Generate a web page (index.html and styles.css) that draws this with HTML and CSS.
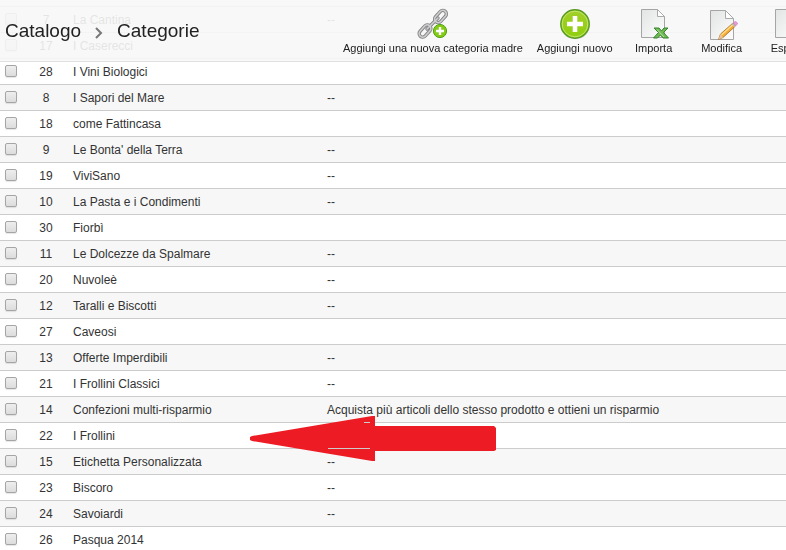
FILE: index.html
```
<!DOCTYPE html>
<html lang="it">
<head>
  <meta charset="utf-8">
  <meta name="viewport" content="width=device-width, initial-scale=1.0">
  <title>Catalogo &gt; Categorie</title>
  <link rel="stylesheet" href="styles.css">
</head>
<body>
  <header class="page-head">
    <h1 class="page-title">
      <span>Catalogo</span>
      <svg class="separator" width="8" height="12" viewBox="0 0 8 12"><path d="M1 1l5 5-5 5" fill="none" stroke="#777" stroke-width="2"/></svg>
      <span>Categorie</span>
    </h1>
    <nav class="toolbar">
      <a class="tool" href="#">
        <svg width="32" height="32" viewBox="0 0 32 32">
          <g fill="none" stroke-linecap="round">
            <g stroke="#858587" stroke-width="3.4">
              <rect x="16.500" y="5" width="14" height="7" rx="3.500" transform="rotate(-48 23.500 8.500)"/>
              <rect x="1" y="19.500" width="14" height="7" rx="3.500" transform="rotate(-48 8 23)"/>
              <path d="M10 21l11-11"/>
            </g>
            <g stroke="#cfcfd1" stroke-width="1.6">
              <rect x="16.500" y="5" width="14" height="7" rx="3.500" transform="rotate(-48 23.500 8.500)"/>
              <rect x="1" y="19.500" width="14" height="7" rx="3.500" transform="rotate(-48 8 23)"/>
              <path d="M10 21l11-11"/>
            </g>
          </g>
          <circle cx="23" cy="23" r="6.600" fill="#84cb16" stroke="#55a01c"/>
          <path d="M23 19v8M19 23h8" stroke="#fff" stroke-width="2.400"/>
        </svg>
        <span>Aggiungi una nuova categoria madre</span>
      </a>
      <a class="tool" href="#">
        <svg width="32" height="32" viewBox="0 0 32 32">
          <defs>
            <linearGradient id="green" x1="0" y1="0" x2="0" y2="1">
              <stop offset="0" stop-color="#a3cf2a"/>
              <stop offset="1" stop-color="#8fce0c"/>
            </linearGradient>
          </defs>
          <circle cx="16.5" cy="16.5" r="14.7" fill="#bbb" opacity=".5"/>
          <circle cx="16" cy="16" r="14.2" fill="url(#green)" stroke="#5a9a26" stroke-width="1.4"/>
          <circle cx="16" cy="16" r="12.8" fill="none" stroke="#c0e56a"/>
          <path d="M16 8v16M8 16h16" stroke="#fff" stroke-width="4.6"/>
        </svg>
        <span>Aggiungi nuovo</span>
      </a>
      <a class="tool" href="#">
        <svg width="32" height="32" viewBox="0 0 32 32">
          <defs>
            <linearGradient id="paper" x1="0" y1="0" x2="1" y2="1">
              <stop offset="0" stop-color="#e2e4e4"/>
              <stop offset="1" stop-color="#fdfdfd"/>
            </linearGradient>
          </defs>
          <path d="M3.500 1.500h16l7 7v21h-23z" fill="url(#paper)" stroke="#a5a5a5"/>
          <path d="M19.500 1.500v7h7z" fill="#fff" stroke="#aaa"/>
          <path d="M16 20h5l2.500 3 2.500-3h4l-4.500 4.500 5 5.500h-5.500l-2.500-3-3 3h-4l5-5.500z" fill="#6fba55" stroke="#34832d"/>
          <path d="M19 21.500l7 7.500" stroke="#b4dfa0"/>
        </svg>
        <span>Importa</span>
      </a>
      <a class="tool" href="#">
        <svg width="32" height="32" viewBox="0 0 32 32">
          <path d="M4.500 2.500h15l8 8v21h-23z" fill="url(#paper)" stroke="#a5a5a5"/>
          <path d="M19.500 2.500v8h8z" fill="#fff" stroke="#aaa"/>
          <path d="M12.500 31.500l2-5.500 12.500-11 2.500 3-12.500 11.500z" fill="#f5ad35" stroke="#a4692a" stroke-width=".8"/>
          <path d="M15.500 27l12-11" stroke="#ffdd8c" stroke-width="1.400"/>
          <path d="M12.500 31.500l2-5.500 2.500 3.500z" fill="#e8c49a"/>
          <path d="M26 15.500l3 3.200" stroke="#bbb" stroke-width="1.500"/>
          <path d="M27.500 14.500q2-2 4 .5 0 1.500-1.700 2.800z" fill="#e59ad9" stroke="#d886cc" stroke-width=".8"/>
        </svg>
        <span>Modifica</span>
      </a>
      <a class="tool" href="#">
        <svg width="32" height="32" viewBox="0 0 32 32">
          <path d="M1.500 1.500h16l7 7v21h-23z" fill="url(#paper)" stroke="#a5a5a5"/>
        </svg>
        <span>Esporta</span>
      </a>
    </nav>
  </header>

  <main class="content">
    <table class="categories">
      <tbody>
        <tr><td class="check"><input type="checkbox" id="c7"></td><td class="num">7</td><td class="name"><label for="c7">La Cantina</label></td><td>--</td></tr>
        <tr><td class="check"><input type="checkbox" id="c17"></td><td class="num">17</td><td class="name"><label for="c17">I Caserecci</label></td><td></td></tr>
        <tr><td class="check"><input type="checkbox" id="c28"></td><td class="num">28</td><td class="name"><label for="c28">I Vini Biologici</label></td><td></td></tr>
        <tr><td class="check"><input type="checkbox" id="c8"></td><td class="num">8</td><td class="name"><label for="c8">I Sapori del Mare</label></td><td>--</td></tr>
        <tr><td class="check"><input type="checkbox" id="c18"></td><td class="num">18</td><td class="name"><label for="c18">come Fattincasa</label></td><td></td></tr>
        <tr><td class="check"><input type="checkbox" id="c9"></td><td class="num">9</td><td class="name"><label for="c9">Le Bonta' della Terra</label></td><td>--</td></tr>
        <tr><td class="check"><input type="checkbox" id="c19"></td><td class="num">19</td><td class="name"><label for="c19">ViviSano</label></td><td>--</td></tr>
        <tr><td class="check"><input type="checkbox" id="c10"></td><td class="num">10</td><td class="name"><label for="c10">La Pasta e i Condimenti</label></td><td>--</td></tr>
        <tr><td class="check"><input type="checkbox" id="c30"></td><td class="num">30</td><td class="name"><label for="c30">Fiorbì</label></td><td></td></tr>
        <tr><td class="check"><input type="checkbox" id="c11"></td><td class="num">11</td><td class="name"><label for="c11">Le Dolcezze da Spalmare</label></td><td>--</td></tr>
        <tr><td class="check"><input type="checkbox" id="c20"></td><td class="num">20</td><td class="name"><label for="c20">Nuvoleè</label></td><td>--</td></tr>
        <tr><td class="check"><input type="checkbox" id="c12"></td><td class="num">12</td><td class="name"><label for="c12">Taralli e Biscotti</label></td><td>--</td></tr>
        <tr><td class="check"><input type="checkbox" id="c27"></td><td class="num">27</td><td class="name"><label for="c27">Caveosi</label></td><td></td></tr>
        <tr><td class="check"><input type="checkbox" id="c13"></td><td class="num">13</td><td class="name"><label for="c13">Offerte Imperdibili</label></td><td>--</td></tr>
        <tr><td class="check"><input type="checkbox" id="c21"></td><td class="num">21</td><td class="name"><label for="c21">I Frollini Classici</label></td><td>--</td></tr>
        <tr><td class="check"><input type="checkbox" id="c14"></td><td class="num">14</td><td class="name"><label for="c14">Confezioni multi-risparmio</label></td><td>Acquista più articoli dello stesso prodotto e ottieni un risparmio</td></tr>
        <tr><td class="check"><input type="checkbox" id="c22"></td><td class="num">22</td><td class="name"><label for="c22">I Frollini</label></td><td></td></tr>
        <tr><td class="check"><input type="checkbox" id="c15"></td><td class="num">15</td><td class="name"><label for="c15">Etichetta Personalizzata</label></td><td>--</td></tr>
        <tr><td class="check"><input type="checkbox" id="c23"></td><td class="num">23</td><td class="name"><label for="c23">Biscoro</label></td><td>--</td></tr>
        <tr><td class="check"><input type="checkbox" id="c24"></td><td class="num">24</td><td class="name"><label for="c24">Savoiardi</label></td><td>--</td></tr>
        <tr><td class="check"><input type="checkbox" id="c26"></td><td class="num">26</td><td class="name"><label for="c26">Pasqua 2014</label></td><td></td></tr>
      </tbody>
    </table>
    <svg class="arrow" width="246" height="46" viewBox="0 0 246 46">
      <path d="M0 21l2-1L122 0h3v10h119l2 2v22l-2 1H125v10h-3L2 25l-2-1z" fill="#ed1c24"/>
      <path d="M114 6.500h6M78 32.500h42" stroke="#ccc"/>
    </svg>
  </main>
</body>
</html>
```

FILE: styles.css
```
body {
  margin: 0;
  background-color: #fff;
  color: #333;
  font-family: Arial, "Liberation Sans", sans-serif;
  font-size: 12px;
  overflow-x: hidden;
}

/* toolbar stays over the list while scrolling */
.page-head {
  position: fixed;
  top: 0;
  left: 0;
  right: 0;
  z-index: 2;
  display: flex;
  height: 61px;
  overflow: hidden;
  background-color: rgba(247, 247, 247, 0.9);
  border-bottom: 1px solid #e0e0e0;
}

.page-title {
  display: flex;
  flex: 0 0 331px;
  align-items: center;
  gap: 14px;
  height: 61px;
  margin: 0;
  padding-left: 5px;
  color: #222;
  font-size: 19px;
  font-weight: normal;
}

.separator {
  margin-top: 4px;
}

.toolbar {
  display: flex;
}

.tool {
  display: flex;
  flex: none;
  flex-direction: column;
  align-items: center;
  gap: 1px;
  box-sizing: border-box;
  min-width: 68px;
  padding: 8px 7px 0;
  color: #222;
  font-size: 11px;
  line-height: 14px;
  text-decoration: none;
  white-space: nowrap;
}

.content {
  position: relative;
  padding-top: 6px;
}

.categories {
  width: 100%;
  table-layout: fixed;
  border-collapse: separate;
  border-spacing: 0;
  border-top: 1px solid #ccc;
}

.categories td {
  box-sizing: border-box;
  height: 26px;
  padding: 0;
  border-bottom: 1px solid #ccc;
  line-height: 16px;
  white-space: nowrap;
}

.categories tr:nth-child(even) {
  background-color: #f7f7f7;
}

.categories .check {
  width: 25px;
  padding: 0 0 2px 5px;
}

.categories .num {
  width: 48px;
  padding-right: 6px;
  text-align: center;
}

.categories .name {
  width: 254px;
}

.check input {
  display: block;
  appearance: none;
  width: 12px;
  height: 12px;
  margin: 0;
  border: 1px solid #a5a5a5;
  border-radius: 2px;
  background-image: linear-gradient(#eee, #dcdcdc);
  box-shadow: 0 1px 1px rgba(0, 0, 0, 0.1);
}

.check input:checked {
  background-image: linear-gradient(#888, #666);
}

.arrow {
  position: absolute;
  top: 416px;
  left: 250px;
}
```
